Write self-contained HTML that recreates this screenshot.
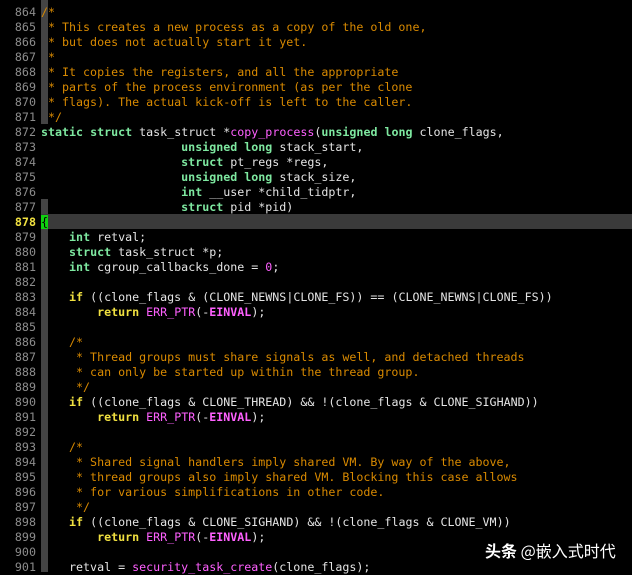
<html><head><style>
body{margin:0;background:#000;width:632px;height:572px;overflow:hidden;position:relative}
.g{position:absolute;left:0;top:5px;width:36px;font:11.7px/15px "DejaVu Sans Mono","Liberation Mono",monospace;color:#8c8c8c;text-align:right;white-space:pre}
.bar{position:absolute;left:41px;top:0;width:7px;height:572px;background:#444}
.cl{position:absolute;left:41px;top:214px;width:591px;height:15px;background:#3a3a3a}
pre{position:absolute;left:41px;top:5px;margin:0;font:11.65px/15px "DejaVu Sans Mono","Liberation Mono",monospace;color:#e4e4e4}
.c{color:#d98a00}.t{color:#7ee8a0;font-weight:bold}.k{color:#f0e040;font-weight:bold}.m{color:#ff60ff}.mb{color:#ff60ff;font-weight:bold}
.br{background:#10d010;color:#000}
.wm{position:absolute;left:485px;top:538px;color:#fff;font:16px "Noto Sans CJK SC",sans-serif;text-shadow:0 0 2px #000}
</style></head><body>
<div class="bar"></div>
<div style="position:absolute;left:41px;top:124px;width:7px;height:75px;background:#000"></div>
<div class="cl"></div>
<div class="g">864
865
866
867
868
869
870
871
872
873
874
875
876
877
<b style="color:#f0e040">878</b>
879
880
881
882
883
884
885
886
887
888
889
890
891
892
893
894
895
896
897
898
899
900
901</div>
<pre><span class="c">/*
 * This creates a new process as a copy of the old one,
 * but does not actually start it yet.
 *
 * It copies the registers, and all the appropriate
 * parts of the process environment (as per the clone
 * flags). The actual kick-off is left to the caller.
 */</span>
<span class="t">static</span> <span class="t">struct</span> task_struct *<span class="m">copy_process</span>(<span class="t">unsigned</span> <span class="t">long</span> clone_flags,
                    <span class="t">unsigned</span> <span class="t">long</span> stack_start,
                    <span class="t">struct</span> pt_regs *regs,
                    <span class="t">unsigned</span> <span class="t">long</span> stack_size,
                    <span class="t">int</span> __user *child_tidptr,
                    <span class="t">struct</span> pid *pid)
<span class="br">{</span>
    <span class="t">int</span> retval;
    <span class="t">struct</span> task_struct *p;
    <span class="t">int</span> cgroup_callbacks_done = <span class="m">0</span>;

    <span class="k">if</span> ((clone_flags &amp; (CLONE_NEWNS|CLONE_FS)) == (CLONE_NEWNS|CLONE_FS))
        <span class="k">return</span> <span class="m">ERR_PTR</span>(-<span class="mb">EINVAL</span>);

    <span class="c">/*
     * Thread groups must share signals as well, and detached threads
     * can only be started up within the thread group.
     */</span>
    <span class="k">if</span> ((clone_flags &amp; CLONE_THREAD) &amp;&amp; !(clone_flags &amp; CLONE_SIGHAND))
        <span class="k">return</span> <span class="m">ERR_PTR</span>(-<span class="mb">EINVAL</span>);

    <span class="c">/*
     * Shared signal handlers imply shared VM. By way of the above,
     * thread groups also imply shared VM. Blocking this case allows
     * for various simplifications in other code.
     */</span>
    <span class="k">if</span> ((clone_flags &amp; CLONE_SIGHAND) &amp;&amp; !(clone_flags &amp; CLONE_VM))
        <span class="k">return</span> <span class="m">ERR_PTR</span>(-<span class="mb">EINVAL</span>);

    retval = <span class="m">security_task_create</span>(clone_flags);</pre>
<div class="wm"><b>头条</b> @嵌入式时代</div>
</body></html>
